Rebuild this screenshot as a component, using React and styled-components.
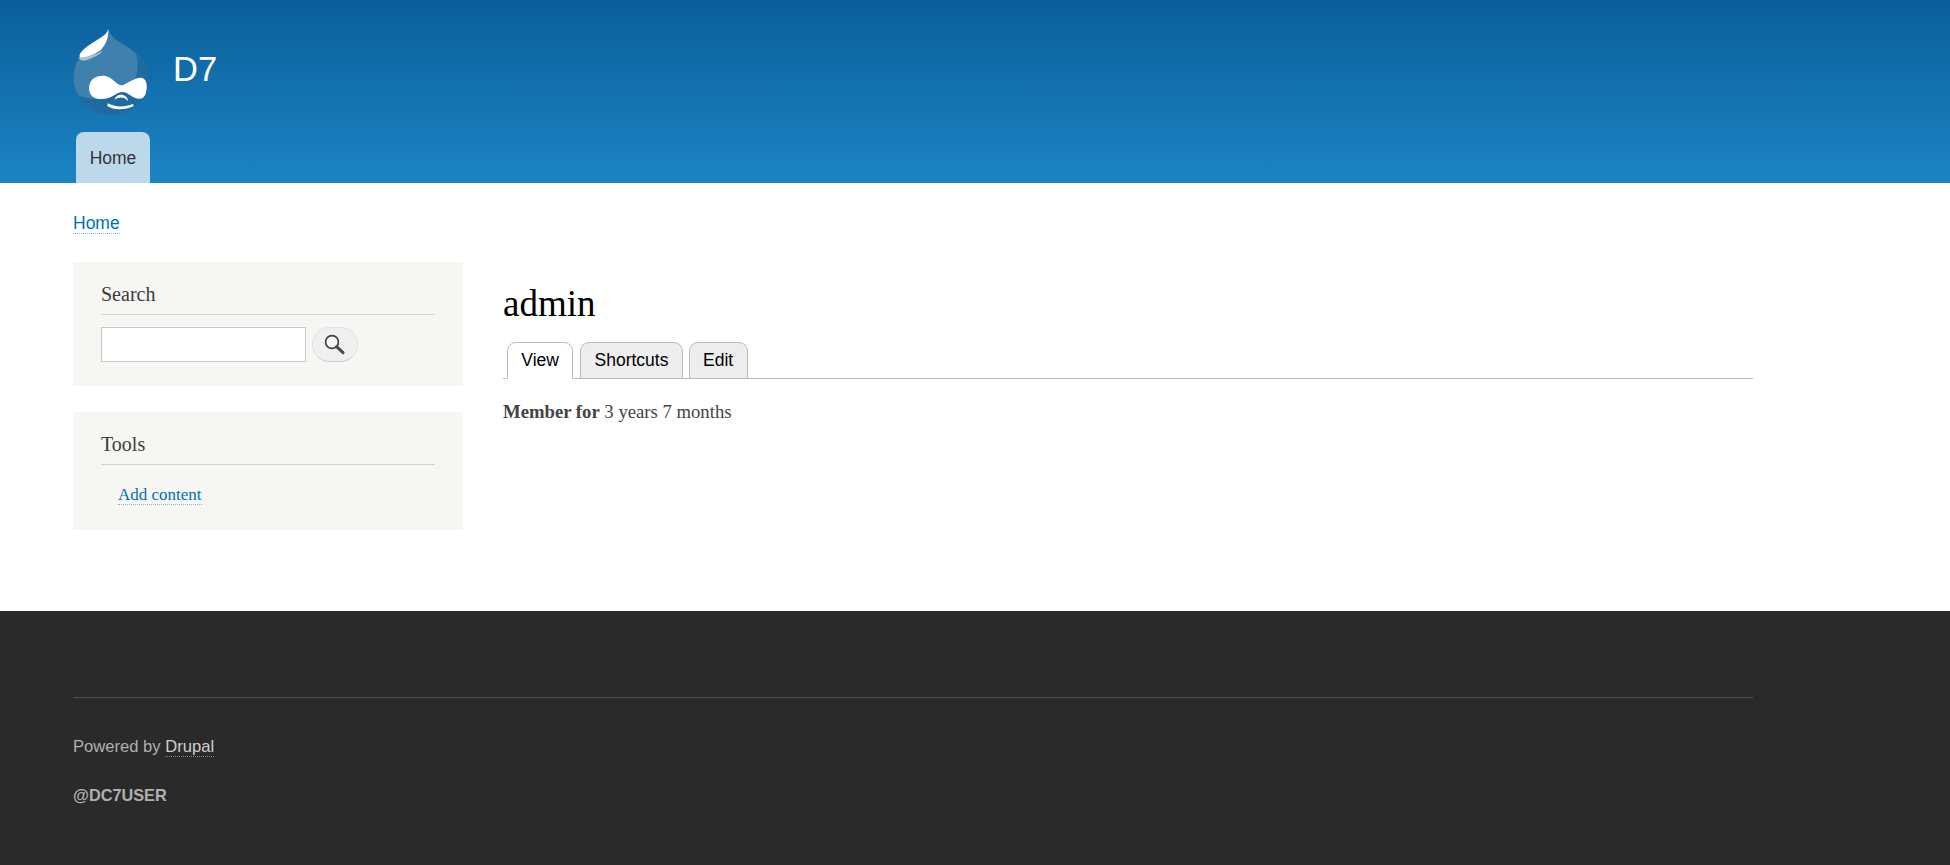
import React from 'react';
import styled, { createGlobalStyle } from 'styled-components';

const GlobalStyle = createGlobalStyle`
  html, body {
    margin: 0;
    padding: 0;
    background: #fff;
  }
  body {
    font-family: "Liberation Serif", serif;
    font-size: 17.5px;
    line-height: 1.5;
    color: #444;
  }
`;

const Page = styled.div`
  height: 865px;
  display: flex;
  flex-direction: column;
`;

const Header = styled.header`
  height: 183px;
  box-sizing: border-box;
  padding: 28px 0 0 73px;
  display: flex;
  flex-direction: column;
  background: linear-gradient(to bottom, #0a5f9a, #1c84c4);
  font-family: "Liberation Sans", sans-serif;
`;

const Branding = styled.div`
  display: flex;
  align-items: flex-start;
  gap: 24px;
  height: 88px;
`;

const SiteName = styled.div`
  margin-top: 24px;
  font-size: 34.5px;
  line-height: 1;
  color: #fff;
`;

const MainMenu = styled.nav`
  display: flex;
  margin: 16px 0 0 3px;
`;

const MenuItem = styled.a`
  width: 74px;
  height: 51px;
  box-sizing: border-box;
  padding-top: 2px;
  display: flex;
  align-items: center;
  justify-content: center;
  border-radius: 8px 8px 0 0;
  background: #bcd8eb;
  color: #333;
  font-size: 17.5px;
`;

const Main = styled.div`
  flex: 1;
  box-sizing: border-box;
  width: 1753px;
  padding: 29px 0 0 73px;
`;

const Breadcrumb = styled.div`
  height: 30px;
  font-family: "Liberation Sans", sans-serif;
  font-size: 17.5px;
  line-height: 22px;
`;

const DottedLink = styled.a`
  color: ${(p) => p.$color || '#0071b3'};
  border-bottom: 1px dotted ${(p) => p.$line || '#7fb5d8'};
`;

const Columns = styled.div`
  display: flex;
  gap: 40px;
  margin-top: 20px;
`;

const Sidebar = styled.aside`
  width: 390px;
  flex: none;
  display: flex;
  flex-direction: column;
  gap: 26px;
`;

const Block = styled.section`
  background: #f6f6f2;
  padding: 20px 28px ${(p) => p.$bottom}px;
`;

const BlockTitle = styled.h2`
  margin: 0;
  height: 32px;
  font-size: 20px;
  line-height: 24px;
  font-weight: normal;
  color: #3b3b3b;
  border-bottom: 1px solid #d0d0d0;
`;

const SearchForm = styled.form`
  display: flex;
  gap: 6px;
  margin-top: 12px;
`;

const SearchInput = styled.input`
  width: 205px;
  height: 35px;
  box-sizing: border-box;
  border: 1px solid #c8c8c8;
  background: #fff;
  padding: 0;
`;

const SearchButton = styled.button`
  width: 46px;
  height: 35px;
  padding: 0 2px 2px 0;
  display: flex;
  align-items: center;
  justify-content: center;
  border: 1px solid #e2e2e2;
  border-bottom-color: #cfcfcf;
  border-radius: 18px;
  background: #f0f0f0;
`;

const ToolsList = styled.div`
  margin: 18px 0 0 17px;
  font-size: 17px;
  line-height: 24px;
`;

const Content = styled.main`
  flex: 1;
`;

const PageTitle = styled.h1`
  margin: 20px 0 0;
  font-size: 37px;
  line-height: 44px;
  font-weight: normal;
  color: #000;
`;

const Tabs = styled.div`
  display: flex;
  height: 36px;
  margin-top: 16px;
  padding-left: 4px;
  border-bottom: 1px solid #bbb;
  font-family: "Liberation Sans", sans-serif;
`;

const Tab = styled.a`
  height: 37px;
  box-sizing: border-box;
  margin-right: ${(p) => p.$gap}px;
  padding: 0 13.3px;
  display: flex;
  align-items: center;
  border: 1px solid #bbb;
  border-bottom-color: ${(p) => (p.$active ? '#fff' : '#bbb')};
  border-radius: 9px 9px 0 0;
  background: ${(p) => (p.$active ? '#fff' : '#ededed')};
  color: #000;
  font-size: 17.5px;
`;

const MemberLine = styled.p`
  margin: 20px 0 0;
  font-size: 18.7px;
  line-height: 26px;
`;

const Footer = styled.footer`
  height: 254px;
  box-sizing: border-box;
  padding: 86px 0 0 73px;
  background: #2a2a2a;
  color: #b0b0b0;
  font-family: "Liberation Sans", sans-serif;
`;

const FooterRule = styled.div`
  width: 1680px;
  height: 1px;
  background: #4f4f4f;
`;

const Powered = styled.div`
  margin-top: 38px;
  font-size: 16.6px;
  line-height: 22px;
`;

const Credit = styled.div`
  margin-top: 26px;
  font-size: 16.3px;
  line-height: 22px;
  font-weight: bold;
`;

function DrupalLogo() {
  return (
    <svg width="76" height="88" viewBox="24 26 228 264" aria-label="Home">
      <path
        d="M130 28 C134 52 160 64 190 84 C228 110 250 138 250 177 C250 238 200 285 138 285 C76 285 25 238 25 175 C25 135 45 105 76 80 C100 62 126 52 130 28 Z"
        fill="#3f80ac"
        stroke="#2a6592"
        strokeWidth="2"
      />
      <path
        d="M212 104 C236 124 250 146 250 177 C250 238 200 285 138 285 C92 285 56 262 36 226 C62 238 90 240 112 238 L205 192 C220 160 222 130 212 104 Z"
        fill="#1f6a9f"
      />
      <path d="M42 112 C42 124 54 126 68 121 C88 114 104 106 116 92 C94 106 66 116 42 112 Z" fill="#a9c3d6" />
      <path d="M130 29 C131 55 124 74 107 92 C86 108 60 116 48 114 C40 112 44 102 54 92 C68 78 88 68 104 57 C118 48 126 42 130 29 Z" fill="#fff" />
      <path
        d="M72 206 C72 178 98 166 122 170 C146 176 156 200 172 198 C190 192 212 172 232 176 C248 180 248 210 240 228 C232 244 212 240 196 228 C180 216 168 214 150 226 C132 238 116 240 98 238 C82 236 72 224 72 206 Z"
        fill="#fff"
      />
      <path d="M148 242 C152 226 170 222 180 230 C186 234 190 240 189 245 C178 232 162 232 148 242 Z" fill="#fff" />
      <path d="M128 252 C150 264 178 264 204 254 L206 260 C180 273 146 273 127 260 Z" fill="#fff" />
    </svg>
  );
}

function SearchIcon() {
  return (
    <svg width="22" height="22" viewBox="0 0 22 22">
      <circle cx="9" cy="9" r="6.4" fill="#f4f6f7" stroke="#454545" strokeWidth="1.7" />
      <path d="M13.6 13.6 L20 19.6" stroke="#4a4a4a" strokeWidth="3" strokeLinecap="round" />
    </svg>
  );
}

export default function App() {
  return (
    <Page>
      <GlobalStyle />
      <Header>
        <Branding>
          <DrupalLogo />
          <SiteName>D7</SiteName>
        </Branding>
        <MainMenu>
          <MenuItem>Home</MenuItem>
        </MainMenu>
      </Header>
      <Main>
        <Breadcrumb>
          <DottedLink>Home</DottedLink>
        </Breadcrumb>
        <Columns>
          <Sidebar>
            <Block $bottom={24}>
              <BlockTitle>Search</BlockTitle>
              <SearchForm>
                <SearchInput type="text" />
                <SearchButton type="button">
                  <SearchIcon />
                </SearchButton>
              </SearchForm>
            </Block>
            <Block $bottom={23}>
              <BlockTitle>Tools</BlockTitle>
              <ToolsList>
                <DottedLink>Add content</DottedLink>
              </ToolsList>
            </Block>
          </Sidebar>
          <Content>
            <PageTitle>admin</PageTitle>
            <Tabs>
              <Tab $active $gap={7}>View</Tab>
              <Tab $gap={6}>Shortcuts</Tab>
              <Tab>Edit</Tab>
            </Tabs>
            <MemberLine>
              <strong>Member for</strong> 3 years 7 months
            </MemberLine>
          </Content>
        </Columns>
      </Main>
      <Footer>
        <FooterRule />
        <Powered>
          Powered by <DottedLink $color="#d0d0d0" $line="#8a8a8a">Drupal</DottedLink>
        </Powered>
        <Credit>@DC7USER</Credit>
      </Footer>
    </Page>
  );
}
